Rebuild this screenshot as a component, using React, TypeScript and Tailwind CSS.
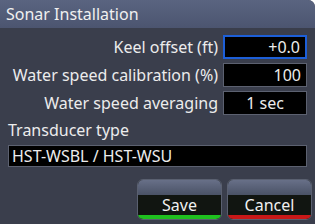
const Field = ({ label, value, active, center }: { label: string; value: string; active?: boolean; center?: boolean }) => (
  <div className="flex h-[24px] items-center justify-end gap-[5px] pr-[8px]">
    <span className="whitespace-nowrap">{label}</span>
    <div
      className={`flex h-[24px] w-[84px] shrink-0 items-center bg-black px-[5px] ${center ? "justify-center" : "justify-end"} ${
        active ? "border-2 border-[#1d5fd8]" : "border border-[#5c6170]"
      }`}
    >
      {value}
    </div>
  </div>
);

const Btn = ({ label, bar }: { label: string; bar: string }) => (
  <button className="flex h-[41px] w-[85px] flex-col overflow-hidden rounded-[6px] border border-[#5a6070] bg-[#111511] text-[16px] text-[#f0f0f0]">
    <div className="h-[15px] w-full shrink-0 bg-gradient-to-b from-[#687088] to-[#4a5266]" />
    <div className="flex flex-1 items-center justify-center leading-none">{label}</div>
    <div className={`h-[4px] w-full shrink-0 ${bar}`} />
  </button>
);

export default function App() {
  return (
    <div
      className="flex h-[224px] w-[315px] flex-col overflow-hidden rounded-tr-[7px] bg-[#3a3e4c] text-[16px] leading-tight text-[#ececec]"
      style={{ fontFamily: "'Noto Sans', sans-serif" }}
    >
      <div className="flex h-[28px] shrink-0 items-center bg-gradient-to-b from-[#5a6480] to-[#4c5570] pl-[6px] text-[16px] text-[#f0f0f0]">
        Sonar Installation
      </div>
      <div className="flex flex-col gap-[4px] pt-[7px]">
        <Field label="Keel offset (ft)" value="+0.0" active />
        <Field label="Water speed calibration (%)" value="100" />
        <Field label="Water speed averaging" value="1 sec" center />
      </div>
      <div className="mt-[5px] pl-[8px]">Transducer type</div>
      <div className="mx-[8px] mt-[5px] flex h-[22px] shrink-0 items-center border border-[#5c6170] bg-black px-[3px]">
        HST-WSBL / HST-WSU
      </div>
      <div className="mt-[12px] flex justify-end gap-[5px] pr-[3px]">
        <Btn label="Save" bar="bg-[#1fc01f]" />
        <Btn label="Cancel" bar="bg-[#c81818]" />
      </div>
    </div>
  );
}
